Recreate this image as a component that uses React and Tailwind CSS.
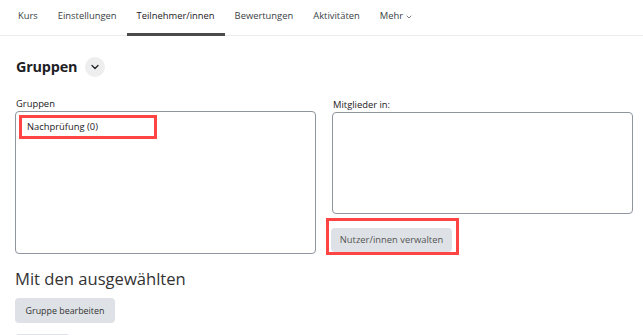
import React from "react";
import { ChevronDown } from "lucide-react";

const tabs = ["Kurs", "Einstellungen", "Teilnehmer/innen", "Bewertungen", "Aktivitäten"];

const App = () => {
  return (
    <div className="w-[643px] h-[335px] overflow-hidden bg-white font-['Open_Sans',sans-serif] text-[#1d2125]">
      {/* secondary navigation */}
      <nav className="flex h-[36px] border-b border-[#ececec] pl-[8px]">
        {tabs.map(tab => (
          <div
            key={tab}
            className={
              tab === "Teilnehmer/innen"
                ? "flex items-center h-[36px] -mb-px px-[10px] text-[9.4px] border-b-[3px] border-[#4b4b4b] text-[#1d2125]"
                : "flex items-center h-[36px] -mb-px px-[10px] text-[9.4px] border-b-[3px] border-transparent text-[#3a3f44]"
            }
          >
            {tab}
          </div>
        ))}
        <div className="flex items-center gap-[2px] h-[36px] -mb-px px-[10px] text-[9.4px] border-b-[3px] border-transparent text-[#3a3f44]">
          Mehr
          <ChevronDown size={8} strokeWidth={2} />
        </div>
      </nav>

      <div className="pl-[15px] pr-[10px]">
        {/* heading */}
        <div className="flex items-center gap-[8px] mt-[21px]">
          <h2 className="text-[14.4px] font-bold leading-none tracking-[-0.2px] pl-px">Gruppen</h2>
          <div className="flex items-center justify-center w-[20px] h-[20px] rounded-full bg-[#eeeeee]">
            <ChevronDown size={12} strokeWidth={2.5} className="text-[#1d2125]" />
          </div>
        </div>

        <div className="grid grid-cols-[301px_301px] gap-x-[16px] mt-[21px]">
          <div className="flex flex-col">
            <label className="text-[9.4px] leading-[12px] mb-[1px] pl-px">Gruppen</label>
            <div className="h-[143px] border border-[#8f959e] rounded-[4px] pt-[3px] pl-[3px]">
              <div className="flex items-center w-[138px] h-[24px] border-[3px] border-[#f44] pl-[5px] text-[9.4px]">
                Nachprüfung (0)
              </div>
            </div>
          </div>

          <div className="flex flex-col">
            <label className="text-[9.4px] leading-[12px] mb-[1px] mt-px pl-px">Mitglieder in:</label>
            <div className="h-[102px] border border-[#8f959e] rounded-[4px]" />
            <div className="self-start -ml-[6px] mt-[4px] border-[3px] border-[#f44] pl-[2px] pr-[4px] pt-[4px]">
              <button className="w-[121px] h-[24px] rounded-[4px] bg-[#dee2e6] text-[9.4px] text-[#555]">
                Nutzer/innen verwalten
              </button>
            </div>
          </div>
        </div>

        <h3 className="mt-[12px] text-[16.6px] leading-[24px] text-[#333]">Mit den ausgewählten</h3>

        <div className="flex flex-col items-start gap-[11px] mt-[7px]">
          <button className="w-[100px] h-[25px] rounded-[4px] bg-[#dee2e6] text-[8.9px] text-[#333]">
            Gruppe bearbeiten
          </button>
          <button className="w-[55px] h-[25px] rounded-[4px] bg-[#dee2e6]" />
        </div>
      </div>
    </div>
  );
};

export default App;
